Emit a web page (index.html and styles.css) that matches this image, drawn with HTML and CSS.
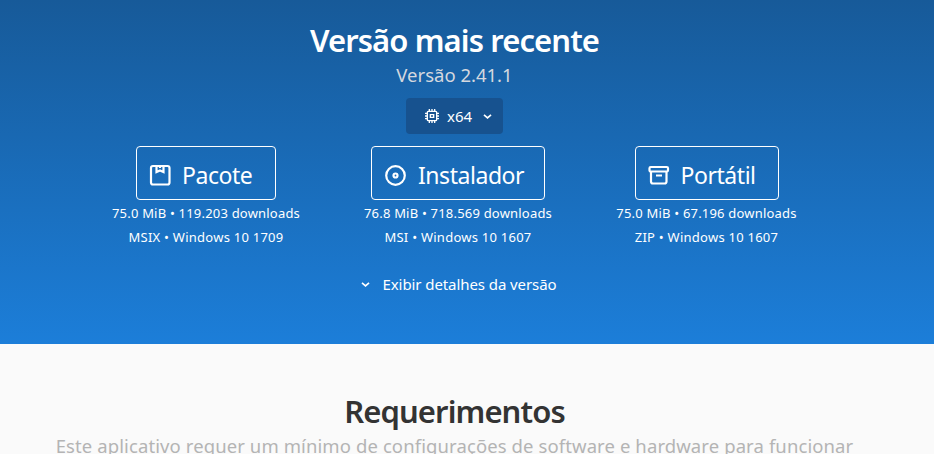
FILE: index.html
```html
<!DOCTYPE html>
<html lang="pt-BR">
<head>
<meta charset="utf-8">
<title>Versão mais recente</title>
<link rel="stylesheet" href="styles.css">
</head>
<body>
<section class="release">
  <h2 class="title title-release">Versão mais recente</h2>
  <p class="version">Versão 2.41.1</p>
  <button class="arch">
    <svg class="chip" viewBox="0 0 24 24"><rect x="5" y="5" width="14" height="14" rx="1.5"/><path d="M9.5 10h5v4h-5zM8 1.5V5M12 1.5V5M16 1.5V5M8 19v3.5M12 19v3.5M16 19v3.5M1.5 8H5M1.5 12H5M1.5 16H5M19 8h3.5M19 12h3.5M19 16h3.5"/></svg>
    <span>x64</span>
    <svg class="chevron" viewBox="0 0 10 10"><path d="M1.8 3.5 5 6.3l3.2-2.8"/></svg>
  </button>
  <div class="downloads">
    <div class="download package">
      <a class="button"><svg viewBox="0 0 24 24"><rect x="3" y="3" width="18.5" height="18.5" rx="2"/><path d="M8.5 3v6L12 7.5 15.500 9V3M12 3v2"/></svg><span>Pacote</span></a>
      <p class="stats">75.0 MiB • 119.203 downloads</p>
      <p class="system">MSIX • Windows 10 1709</p>
    </div>
    <div class="download installer">
      <a class="button"><svg viewBox="0 0 24 24"><circle cx="12.500" cy="12.500" r="9.300"/><circle cx="12.500" cy="12.500" r="2"/></svg><span>Instalador</span></a>
      <p class="stats">76.8 MiB • 718.569 downloads</p>
      <p class="system">MSI • Windows 10 1607</p>
    </div>
    <div class="download portable">
      <a class="button"><svg viewBox="0 0 24 24"><rect x="2.500" y="4" width="18.500" height="4.500" rx="1.300"/><path d="M4 8.500v10q0 2 2 2h11.500q2 0 2-2v-10M9 12.500h6"/></svg><span>Portátil</span></a>
      <p class="stats">75.0 MiB • 67.196 downloads</p>
      <p class="system">ZIP • Windows 10 1607</p>
    </div>
  </div>
  <a class="details"><svg class="chevron" viewBox="0 0 10 10"><path d="M1.8 3.5 5 6.3l3.2-2.8"/></svg><span>Exibir detalhes da versão</span></a>
</section>
<section class="requirements">
  <h2 class="title title-requirements">Requerimentos</h2>
  <p class="intro">Este aplicativo requer um mínimo de configurações de software e hardware para funcionar</p>
</section>
</body>
</html>
```
FILE: styles.css
```css
* { box-sizing: border-box; }
body {
  margin: 0;
  height: 454px;
  overflow: hidden;
  font-family: "Noto Sans", "Open Sans", sans-serif;
  background: #fafafa;
}
h2, p { margin: 0; white-space: nowrap; }
section {
  display: flex;
  flex-direction: column;
  align-items: center;
  padding-right: 25px;
}
svg { fill: none; stroke: currentColor; stroke-width: 2; flex: none; }
.release {
  height: 344px;
  padding-top: 19px;
  color: #fff;
  background: linear-gradient(#175a99, #1c7ed9);
}
.title { font-size: 31px; line-height: 42px; font-weight: 600; letter-spacing: -0.9px; }
.version { margin-top: 1px; font-size: 18.5px; line-height: 26px; color: #d4d8df; }
.arch {
  display: flex;
  align-items: center;
  width: 97px;
  height: 36px;
  margin-top: 10px;
  padding: 0 10px 0 18px;
  border: 0;
  border-radius: 4px;
  background: #17528f;
  color: #fff;
  font: 15px "Noto Sans", sans-serif;
}
.chip { width: 16px; height: 16px; margin-right: 7px; }
.chevron { width: 11px; height: 11px; stroke-width: 1.5; }
.arch .chevron { margin-left: auto; }
.downloads { display: flex; gap: 64px; margin-top: 12px; }
.download { display: flex; flex-direction: column; align-items: center; }
.package, .installer { width: 189px; }
.installer { margin-left: -1px; }
.portable { width: 182px; margin-left: -1px; }
.button {
  display: flex;
  align-items: center;
  height: 54px;
  padding: 3px 0 0 11px;
  border: 1px solid #fff;
  border-radius: 4px;
  font-size: 23px;
  letter-spacing: -0.45px;
}
.button svg { width: 24px; height: 24px; margin-right: 10px; stroke-width: 2.2; }
.package .button { width: 140px; }
.installer .button { width: 174px; }
.installer .button svg { margin-right: 11px; }
.portable .button { width: 144px; }
.stats, .system { font-size: 13px; line-height: 24px; letter-spacing: 0.2px; }
.system { letter-spacing: 0.25px; }
.stats { margin-top: 1px; }
.details { display: flex; align-items: center; gap: 11px; margin-top: 23px; padding-left: 8px; font-size: 15px; line-height: 24px; letter-spacing: -0.08px; white-space: nowrap; }
.requirements { padding-top: 46px; color: #333; }
.intro { margin-top: 1px; font-size: 18.5px; line-height: 26px; letter-spacing: 0.1px; color: #b4b4b4; }
```
